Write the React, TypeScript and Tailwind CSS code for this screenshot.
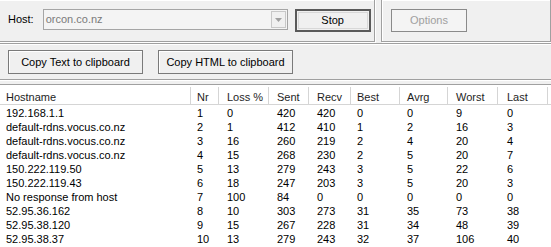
import React from "react";

type Hop = {
  host: string;
  nr: number;
  loss: number;
  sent: number;
  recv: number;
  best: number;
  avrg: number;
  worst: number;
  last: number;
};

const HOPS: Hop[] = [
  { host: "192.168.1.1", nr: 1, loss: 0, sent: 420, recv: 420, best: 0, avrg: 0, worst: 9, last: 0 },
  { host: "default-rdns.vocus.co.nz", nr: 2, loss: 1, sent: 412, recv: 410, best: 1, avrg: 2, worst: 16, last: 3 },
  { host: "default-rdns.vocus.co.nz", nr: 3, loss: 16, sent: 260, recv: 219, best: 2, avrg: 4, worst: 20, last: 4 },
  { host: "default-rdns.vocus.co.nz", nr: 4, loss: 15, sent: 268, recv: 230, best: 2, avrg: 5, worst: 20, last: 7 },
  { host: "150.222.119.50", nr: 5, loss: 13, sent: 279, recv: 243, best: 3, avrg: 5, worst: 22, last: 6 },
  { host: "150.222.119.43", nr: 6, loss: 18, sent: 247, recv: 203, best: 3, avrg: 5, worst: 20, last: 3 },
  { host: "No response from host", nr: 7, loss: 100, sent: 84, recv: 0, best: 0, avrg: 0, worst: 0, last: 0 },
  { host: "52.95.36.162", nr: 8, loss: 10, sent: 303, recv: 273, best: 31, avrg: 35, worst: 73, last: 38 },
  { host: "52.95.38.120", nr: 9, loss: 15, sent: 267, recv: 228, best: 31, avrg: 34, worst: 48, last: 39 },
  { host: "52.95.38.37", nr: 10, loss: 13, sent: 279, recv: 243, best: 32, avrg: 37, worst: 106, last: 40 },
];

// column widths in px, with the text start offset inside each cell
const COLS: { key: keyof Hop; label: string; w: string; pl: string }[] = [
  { key: "host", label: "Hostname", w: "w-[191px]", pl: "pl-[6px]" },
  { key: "nr", label: "Nr", w: "w-[28px]", pl: "pl-[6px]" },
  { key: "loss", label: "Loss %", w: "w-[50px]", pl: "pl-[8px]" },
  { key: "sent", label: "Sent", w: "w-[40px]", pl: "pl-[8px]" },
  { key: "recv", label: "Recv", w: "w-[42px]", pl: "pl-[8px]" },
  { key: "best", label: "Best", w: "w-[49px]", pl: "pl-[6px]" },
  { key: "avrg", label: "Avrg", w: "w-[48px]", pl: "pl-[7px]" },
  { key: "worst", label: "Worst", w: "w-[50px]", pl: "pl-[8px]" },
  { key: "last", label: "Last", w: "w-[50px]", pl: "pl-[9px]" },
];

const etched = "border border-[#a0a0a0] shadow-[inset_1px_1px_0_#fff,1px_1px_0_#fff]";

export default function App() {
  return (
    <div
      className="w-[551px] h-[247px] overflow-hidden bg-[#f0f0f0] text-[11px] text-black"
      style={{ fontFamily: '"Liberation Sans", Arial, sans-serif' }}
    >
      {/* top: host + options */}
      <div className="flex h-[42px]">
        <div className={`relative -ml-[2px] -mt-[1px] w-[377px] flex items-start ${etched}`}>
          <span className="mt-[14px] ml-[9px] leading-none">Host:</span>
          <div className="ml-[9px] mt-[9px] flex h-[21px] w-[245px] items-center border border-[#a5a5a5] bg-[#f4f4f4]">
            <span className="flex-1 pl-[2px] text-[#7a7a7a]">orcon.co.nz</span>
            <div className="mr-px flex h-[17px] w-[15px] items-center justify-center border border-[#c8c8c8] bg-[#f0f0f0]">
              <svg width="7" height="4" viewBox="0 0 7 4">
                <path d="M0 0h7L3.5 4z" fill="#a0a0a0" />
              </svg>
            </div>
          </div>
          <button className="ml-[7px] mt-[9px] flex h-[23px] w-[76px] items-center justify-center border-2 border-[#5a5a5a] bg-[#f0f0f0] outline outline-1 -outline-offset-4 outline-[#d8d8d8]">
            Stop
          </button>
        </div>
        <div className={`-mt-[1px] ml-[6px] flex-1 ${etched}`}>
          <button className="ml-[9px] mt-[9px] flex h-[23px] w-[76px] items-center justify-center border border-[#8a8a8a] bg-[#f4f4f4] text-[#a0a0a0]">
            Options
          </button>
        </div>
      </div>

      {/* copy buttons */}
      <div className={`-ml-[2px] mt-[1px] flex h-[37px] w-[554px] items-start gap-[15px] pl-[9px] pt-[6px] ${etched}`}>
        <button className="flex h-[24px] w-[135px] items-center justify-center border border-[#7a7a7a] bg-[#f0f0f0] shadow-[inset_1px_1px_0_#fff]">
          Copy Text to clipboard
        </button>
        <button className="flex h-[24px] w-[135px] items-center justify-center border border-[#7a7a7a] bg-[#f0f0f0] shadow-[inset_1px_1px_0_#fff]">
          Copy HTML to clipboard
        </button>
      </div>

      {/* result list */}
      <div className="mt-[4px] h-[200px] border-t border-[#a0a0a0] bg-white">
        <div className="flex h-[20px] border-b border-[#d5d5d5] pt-[2px]">
          {COLS.map((c) => (
            <div
              key={c.key}
              className={`${c.w} ${c.pl} flex shrink-0 items-center border-r border-[#d5d5d5] pt-[4px] text-[#1e1e1e]`}
            >
              {c.label}
            </div>
          ))}
          <div className="flex-1" />
        </div>
        <div className="pt-[1px]">
          {HOPS.map((h, i) => (
            <div key={i} className="flex h-[14px] items-center leading-none">
              {COLS.map((c) => (
                <div key={c.key} className={`${c.w} ${c.pl} shrink-0 whitespace-nowrap`}>
                  {h[c.key]}
                </div>
              ))}
            </div>
          ))}
        </div>
      </div>
    </div>
  );
}
